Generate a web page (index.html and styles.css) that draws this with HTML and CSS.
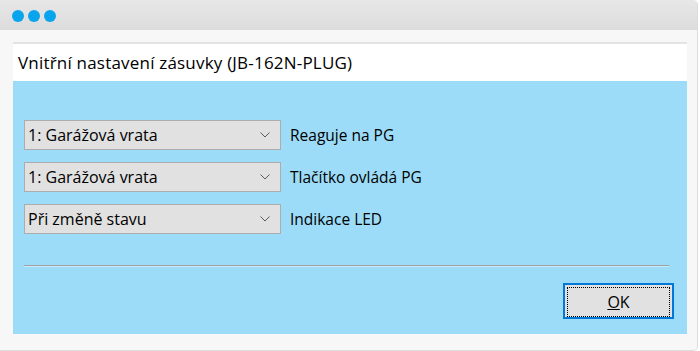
FILE: index.html
```html
<!DOCTYPE html>
<html>
<head>
    <meta charset="UTF-8">
    <title>Vnitřní nastavení zásuvky</title>
    <link rel="stylesheet" href="styles.css">
</head>
<body>
    <div class="window">
        <div class="titlebar">
            <span class="dot"></span>
            <span class="dot"></span>
            <span class="dot"></span>
        </div>
        <div class="dialog">
            <div class="dialog-title">Vnitřní nastavení zásuvky (JB-162N-PLUG)</div>
            <div class="dialog-body">
                <div class="rows">
                    <div class="row">
                        <div class="combo">
                            <span>1: Garážová vrata</span>
                            <svg class="chevron" width="10" height="6" viewBox="0 0 10 6"><path d="M0.5 0.5 L5 5 L9.5 0.5" fill="none" stroke="#5a5a5a" stroke-width="1"/></svg>
                        </div>
                        <span class="label">Reaguje na PG</span>
                    </div>
                    <div class="row">
                        <div class="combo">
                            <span>1: Garážová vrata</span>
                            <svg class="chevron" width="10" height="6" viewBox="0 0 10 6"><path d="M0.5 0.5 L5 5 L9.5 0.5" fill="none" stroke="#5a5a5a" stroke-width="1"/></svg>
                        </div>
                        <span class="label">Tlačítko ovládá PG</span>
                    </div>
                    <div class="row">
                        <div class="combo">
                            <span>Při změně stavu</span>
                            <svg class="chevron" width="10" height="6" viewBox="0 0 10 6"><path d="M0.5 0.5 L5 5 L9.5 0.5" fill="none" stroke="#5a5a5a" stroke-width="1"/></svg>
                        </div>
                        <span class="label">Indikace LED</span>
                    </div>
                </div>
                <div class="separator"></div>
                <div class="footer">
                    <button class="btn-ok"><span class="focus"><u>O</u>K</span></button>
                </div>
            </div>
        </div>
    </div>
</body>
</html>
```

FILE: styles.css
```css
:root {
    --frame: #f7f7f7;
    --blue-bg: #9cdcf8;
    --control: #e1e1e1;
    --control-border: #adadad;
}
body {
    margin: 0;
    background: #fff;
    font-family: "Open Sans", "Noto Sans", sans-serif;
    color: #000;
}
.window {
    box-sizing: border-box;
    width: 698px;
    height: 351px;
    border: 1px solid #dddddd;
    border-top: none;
    border-left: none;
    border-radius: 0 5px 5px 0;
    background: var(--frame);
    display: flex;
    flex-direction: column;
    overflow: hidden;
}
.titlebar {
    height: 30px;
    flex: none;
    background: linear-gradient(#e7e7e7, #dcdcdc);
    display: flex;
    align-items: center;
    gap: 4px;
    padding-left: 12px;
    padding-top: 2px;
    box-sizing: border-box;
}
.dot {
    width: 12px;
    height: 12px;
    border-radius: 50%;
    background: #08a4ee;
}
.dialog {
    margin: 12px 10px 0 13px;
    border-top: 2px solid #e3e3e3;
    display: flex;
    flex-direction: column;
}
.dialog-title {
    height: 37px;
    background: #fff;
    padding-left: 5px;
    font-size: 17px;
    letter-spacing: 0.2px;
    line-height: 37px;
}
.dialog-body {
    height: 253px;
    box-sizing: border-box;
    background: var(--blue-bg);
    padding: 39px 18px 0 11px;
    display: flex;
    flex-direction: column;
}
.rows {
    display: flex;
    flex-direction: column;
    gap: 12px;
}
.row {
    display: flex;
    align-items: center;
    font-size: 16px;
}
.combo {
    box-sizing: border-box;
    width: 257px;
    height: 30px;
    background: var(--control);
    border: 1px solid var(--control-border);
    display: flex;
    align-items: center;
    justify-content: space-between;
    padding: 0 10px 0 3px;
}
.chevron {
    display: block;
}
.label {
    margin-left: 9px;
    font-size: 15.5px;
}
.separator {
    margin-top: 31px;
    border-top: 1px solid #a0a0a0;
    border-bottom: 1px solid #c9ecfc;
}
.footer {
    display: flex;
    justify-content: flex-end;
    margin: 16px -5px 0 0;
}
.btn-ok {
    box-sizing: border-box;
    width: 111px;
    height: 36px;
    padding: 2px;
    border: 2px solid #0078d7;
    background: var(--control);
    font-family: inherit;
    font-size: 16px;
    color: #000;
}
.btn-ok .focus {
    display: flex;
    align-items: center;
    justify-content: center;
    height: 100%;
    border: 1px dotted #000;
}
```
